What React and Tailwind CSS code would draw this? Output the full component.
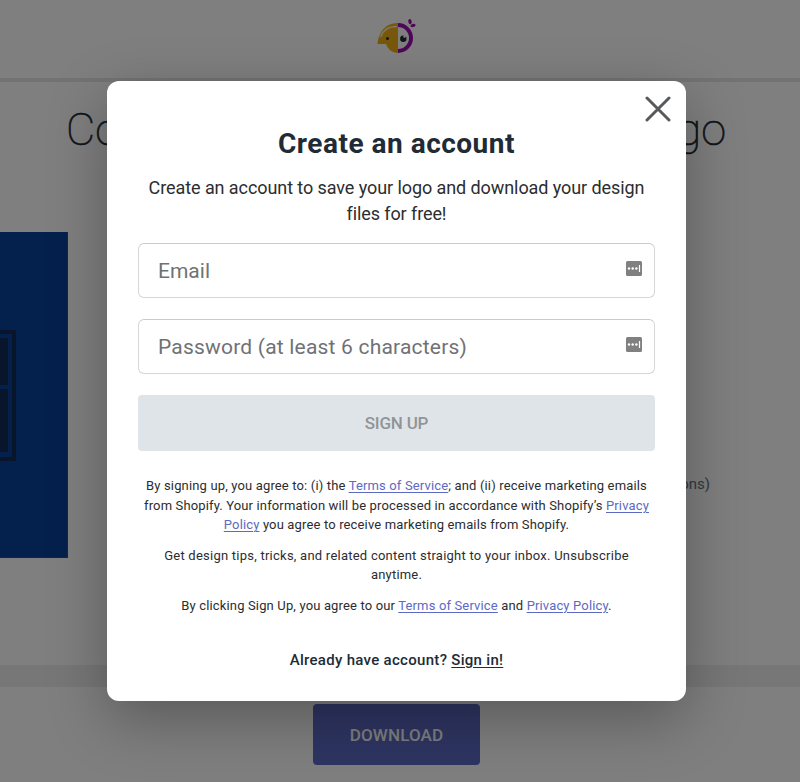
import React from "react";

const link = "text-[#5c6ac4] underline underline-offset-2 decoration-1";

function BirdLogo() {
  return (
    <svg className="mt-[18px] ml-[376px] block" width="42" height="38" viewBox="0 0 42 38">
      <path d="M22 5C11 4.500 2.500 13 1.500 26H10C12 31.500 16 35 22 35Z" fill="#efb016" />
      <path d="M4.800 18.500C7.500 12 13 8.500 20.500 8.600" fill="none" stroke="#fff3d0" strokeWidth="1.500" strokeLinecap="round" />
      <circle cx="11.500" cy="20.500" r="1.500" fill="#212b36" />
      <path d="M22 5A15 15 0 0 1 22 35Z" fill="#a00db0" />
      <path d="M22 9A11 11 0 0 1 22 31Z" fill="#fff" />
      <circle cx="27.300" cy="20.800" r="3.200" fill="#212b36" />
      <circle cx="28.500" cy="18.500" r="1.300" fill="#fff" />
      <ellipse cx="34" cy="3.600" rx="1.700" ry="2.700" transform="rotate(-12 34 3.600)" fill="#a00db0" />
      <ellipse cx="37" cy="7.500" rx="2.600" ry="1.600" transform="rotate(-12 37 7.500)" fill="#a00db0" />
    </svg>
  );
}

function FillIcon() {
  return (
    <svg width="16" height="15" viewBox="0 0 16 15">
      <rect width="16" height="15" rx="1.500" fill="#808080" />
      <circle cx="3" cy="7.500" r="1.200" fill="#fff" />
      <circle cx="6.700" cy="7.500" r="1.200" fill="#fff" />
      <circle cx="10.400" cy="7.500" r="1.200" fill="#fff" />
      <path d="M13.500 4V11" stroke="#fff" strokeWidth="1.200" />
    </svg>
  );
}

function Line({ className, children }) {
  return (
    <span className="flex justify-center whitespace-pre">
      <span className={className}>{children}</span>
    </span>
  );
}

function Page() {
  return (
    <div className="flex h-[782px] flex-col bg-white">
      <header className="h-[82px] shrink-0 border-b-4 border-[#e6e6ee]">
        <BirdLogo />
      </header>
      <h1 className="flex h-[150px] shrink-0 justify-between pt-[19px] pr-[74px] pl-[66px] text-[45px] leading-[58px] text-[#212b36]">
        <span className="font-thin [-webkit-text-stroke:0.7px]">Co</span>
        <span className="font-thin [-webkit-text-stroke:0.7px]">go</span>
      </h1>
      <section className="flex h-[433px] shrink-0 justify-between bg-[#fefefe]">
        <div className="h-[326px] w-[68px] overflow-hidden border-r border-b border-[#304878] bg-[#084099]">
          <div className="mt-[98px] h-[131px] w-[16px] border-y-4 border-r-4 border-[#102b54] pt-1 pr-1">
            <div className="h-[47px] w-[8px] bg-[#102b54]" />
            <div className="mt-1 h-[63px] w-[8px] bg-[#102b54]" />
          </div>
        </div>
        <p className="mt-[240px] mr-[90px] text-[15px] leading-6 text-[#637381]">ons)</p>
      </section>
      <div className="h-[22px] shrink-0 bg-[#eeeeee]" />
      <footer className="flex grow justify-center pt-[17px] pr-[7px]">
        <button className="h-[61px] w-[167px] rounded-[4px] bg-[#5c6ac4] pt-[2px] text-[17px] font-medium tracking-[0.15px] text-white">DOWNLOAD</button>
      </footer>
    </div>
  );
}

function Field({ label, className }) {
  return (
    <div className="flex justify-between rounded-[6px] border border-[#d5d6d8] border-t-[#c8cacc] pr-[12px] pl-[19px]">
      <span className={className}>{label}</span>
      <span className="mt-[17px]"><FillIcon /></span>
    </div>
  );
}

function Modal() {
  return (
    <div className="w-[579px] h-[620px] rounded-[12px] bg-white px-[31px] text-[#2b2d30] shadow-[0_18px_60px_rgba(0,0,0,0.3)]">
      <div className="-mr-[16px] flex h-[42px] justify-end pt-[15px]">
        <svg width="26" height="26" viewBox="0 0 26 26" className="shrink-0 stroke-[#58595b] stroke-[3]" strokeLinecap="round">
          <path d="M2 2L24 24M24 2L2 24" />
        </svg>
      </div>
      <h2 className="text-[28px] leading-[42px] font-bold text-[#212b36]">
        <Line className="tracking-[0.5px]">Create an account</Line>
      </h2>
      <div className="mt-[10px] text-[18px] leading-[26px]">
        <Line className="tracking-[-0.08px]">Create an account to save your logo and download your design</Line>
        <Line className="tracking-[-0.1px]">files for free!</Line>
      </div>
      <div className="mt-[16px] flex flex-col gap-[21px] text-[#6f7275]">
        <Field label="Email" className="h-[53px] text-[21px] leading-[55px]" />
        <Field label="Password (at least 6 characters)" className="h-[53px] text-[21px] leading-[55px] tracking-[0.2px]" />
      </div>
      <button className="mt-[21px] block h-[56px] w-full rounded-[4px] bg-[#dfe4e8] pt-[2px] text-[17px] font-medium tracking-[-0.2px] text-[#919496]">
        SIGN UP
      </button>
      <div className="mt-[25px] text-[13px] leading-[19.5px]">
        <Line className="tracking-[0.15px]">By signing up, you agree to: (i) the <a className={link}>Terms of Service</a>; and (ii) receive marketing emails</Line>
        <Line className="tracking-[0.14px]">from Shopify. Your information will be processed in accordance with Shopify’s <a className={link}>Privacy</a></Line>
        <Line className="tracking-[0.15px]"><a className={link}>Policy</a> you agree to receive marketing emails from Shopify.</Line>
      </div>
      <div className="mt-[11px] text-[13px] leading-[19.5px]">
        <Line className="tracking-[0.24px]">Get design tips, tricks, and related content straight to your inbox. Unsubscribe</Line>
        <Line className="tracking-[0.2px]">anytime.</Line>
      </div>
      <div className="mt-[11px] text-[13px] leading-[19.5px]">
        <Line className="tracking-[0.15px]">By clicking Sign Up, you agree to our <a className={link}>Terms of Service</a> and <a className={link}>Privacy Policy</a>.</Line>
      </div>
      <div className="mt-[35px] text-[15px] leading-[20px] font-medium text-[#212b36]">
        <Line className="tracking-[0.3px]">Already have account? <a className="underline underline-offset-2">Sign in!</a></Line>
      </div>
    </div>
  );
}

export default function App() {
  return (
    <main className="relative h-[782px] w-[800px] overflow-hidden font-[Roboto,'Open_Sans',sans-serif]">
      <Page />
      <div className="absolute inset-0 bg-black/50 pt-[81px] pl-[107px]">
        <Modal />
      </div>
    </main>
  );
}
